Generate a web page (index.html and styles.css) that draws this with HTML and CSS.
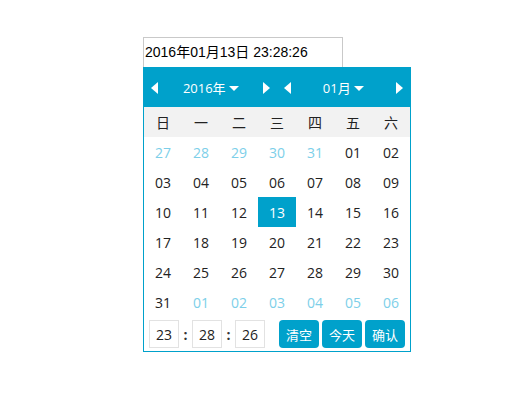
FILE: index.html
```html
<!DOCTYPE html>
<html lang="zh-CN">
<head>
<meta charset="utf-8">
<title>jeDate</title>
<link rel="stylesheet" href="styles.css">
</head>
<body>
<div class="picker">
  <div class="date-input">2016年01月13日 23:28:26</div>
  <div class="cal">
    <div class="cal-head">
      <div class="half">
        <svg class="arrow" width="7" height="12" viewBox="0 0 7 12"><polygon points="7,0 7,12 0,6" fill="#fff"/></svg>
        <span class="sel">2016年<i class="caret"></i></span>
        <svg class="arrow" width="7" height="12" viewBox="0 0 7 12"><polygon points="0,0 0,12 7,6" fill="#fff"/></svg>
      </div>
      <div class="half">
        <svg class="arrow" width="7" height="12" viewBox="0 0 7 12"><polygon points="7,0 7,12 0,6" fill="#fff"/></svg>
        <span class="sel">01月<i class="caret"></i></span>
        <svg class="arrow" width="7" height="12" viewBox="0 0 7 12"><polygon points="0,0 0,12 7,6" fill="#fff"/></svg>
      </div>
    </div>
    <div class="week">
      <span>日</span><span>一</span><span>二</span><span>三</span><span>四</span><span>五</span><span>六</span>
    </div>
    <div class="days">
      <span class="other">27</span><span class="other">28</span><span class="other">29</span><span class="other">30</span><span class="other">31</span><span>01</span><span>02</span>
      <span>03</span><span>04</span><span>05</span><span>06</span><span>07</span><span>08</span><span>09</span>
      <span>10</span><span>11</span><span>12</span><span class="active">13</span><span>14</span><span>15</span><span>16</span>
      <span>17</span><span>18</span><span>19</span><span>20</span><span>21</span><span>22</span><span>23</span>
      <span>24</span><span>25</span><span>26</span><span>27</span><span>28</span><span>29</span><span>30</span>
      <span>31</span><span class="other">01</span><span class="other">02</span><span class="other">03</span><span class="other">04</span><span class="other">05</span><span class="other">06</span>
    </div>
    <div class="cal-foot">
      <div class="time">
        <span class="tbox">23</span><span class="colon">:</span><span class="tbox">28</span><span class="colon">:</span><span class="tbox">26</span>
      </div>
      <div class="btns">
        <span class="btn">清空</span><span class="btn">今天</span><span class="btn">确认</span>
      </div>
    </div>
  </div>
</div>
</body>
</html>
```

FILE: styles.css
```css
html, body {
  margin: 0;
  padding: 0;
  background: #fff;
}
body {
  padding: 37px 0 0 143px;
  font-family: "Open Sans", "Noto Sans CJK SC", sans-serif;
}
.picker {
  width: 268px;
  display: flex;
  flex-direction: column;
}
.date-input {
  box-sizing: border-box;
  width: 200px;
  height: 30px;
  border: 1px solid #c9c9c9;
  border-bottom: none;
  padding: 0 0 0 1px;
  font-family: "Liberation Sans", "Noto Sans CJK SC", sans-serif;
  font-size: 14px;
  line-height: 29px;
  color: #000;
  white-space: nowrap;
}
.cal {
  box-sizing: border-box;
  width: 268px;
  border: 1px solid #00a1cb;
  display: flex;
  flex-direction: column;
}
.cal-head {
  height: 39px;
  background: #00a1cb;
  display: flex;
}
.half {
  flex: 1;
  display: flex;
  align-items: center;
  justify-content: space-between;
  padding: 0 7px 0 7px;
}
.half:first-child {
  padding-right: 6px;
}
.arrow {
  display: block;
}
.sel {
  color: #fff;
  font-size: 13px;
  display: flex;
  align-items: center;
  font-family: "Open Sans", "Noto Sans CJK SC", sans-serif;
}
.caret {
  width: 0;
  height: 0;
  border-left: 5px solid transparent;
  border-right: 5px solid transparent;
  border-top: 5px solid #fff;
  margin-left: 3px;
  margin-top: 2px;
}
.week {
  height: 30px;
  background: #f2f2f2;
  display: grid;
  grid-template-columns: repeat(7, 38px);
  align-items: center;
}
.week span {
  text-align: center;
  font-size: 14px;
  color: #222;
  font-family: "Noto Sans CJK SC", sans-serif;
  font-weight: 400;
}
.days {
  display: grid;
  grid-template-columns: repeat(7, 38px);
  grid-auto-rows: 30px;
}
.days span {
  display: flex;
  align-items: center;
  justify-content: center;
  font-size: 14px;
  color: #222;
}
.days span.other {
  color: #7dcfe9;
}
.days span.active {
  background: #00a1cb;
  color: #fff;
}
.cal-foot {
  height: 34px;
  display: flex;
  align-items: flex-start;
  padding: 3px 5px 0 5px;
  box-sizing: border-box;
}
.time {
  display: flex;
  align-items: center;
}
.tbox {
  box-sizing: border-box;
  width: 30px;
  height: 28px;
  border: 1px solid #e2e2e2;
  display: flex;
  align-items: center;
  justify-content: center;
  font-size: 14px;
  color: #222;
}
.colon {
  width: 13px;
  text-align: center;
  font-size: 14px;
  color: #333;
  font-weight: bold;
}
.btns {
  margin-left: auto;
  display: flex;
  gap: 3px;
}
.btn {
  width: 40px;
  height: 28px;
  border-radius: 4px;
  background: #00a1cb;
  color: #fff;
  font-size: 13px;
  font-family: "Noto Sans CJK SC", sans-serif;
  display: flex;
  align-items: center;
  justify-content: center;
}
```
